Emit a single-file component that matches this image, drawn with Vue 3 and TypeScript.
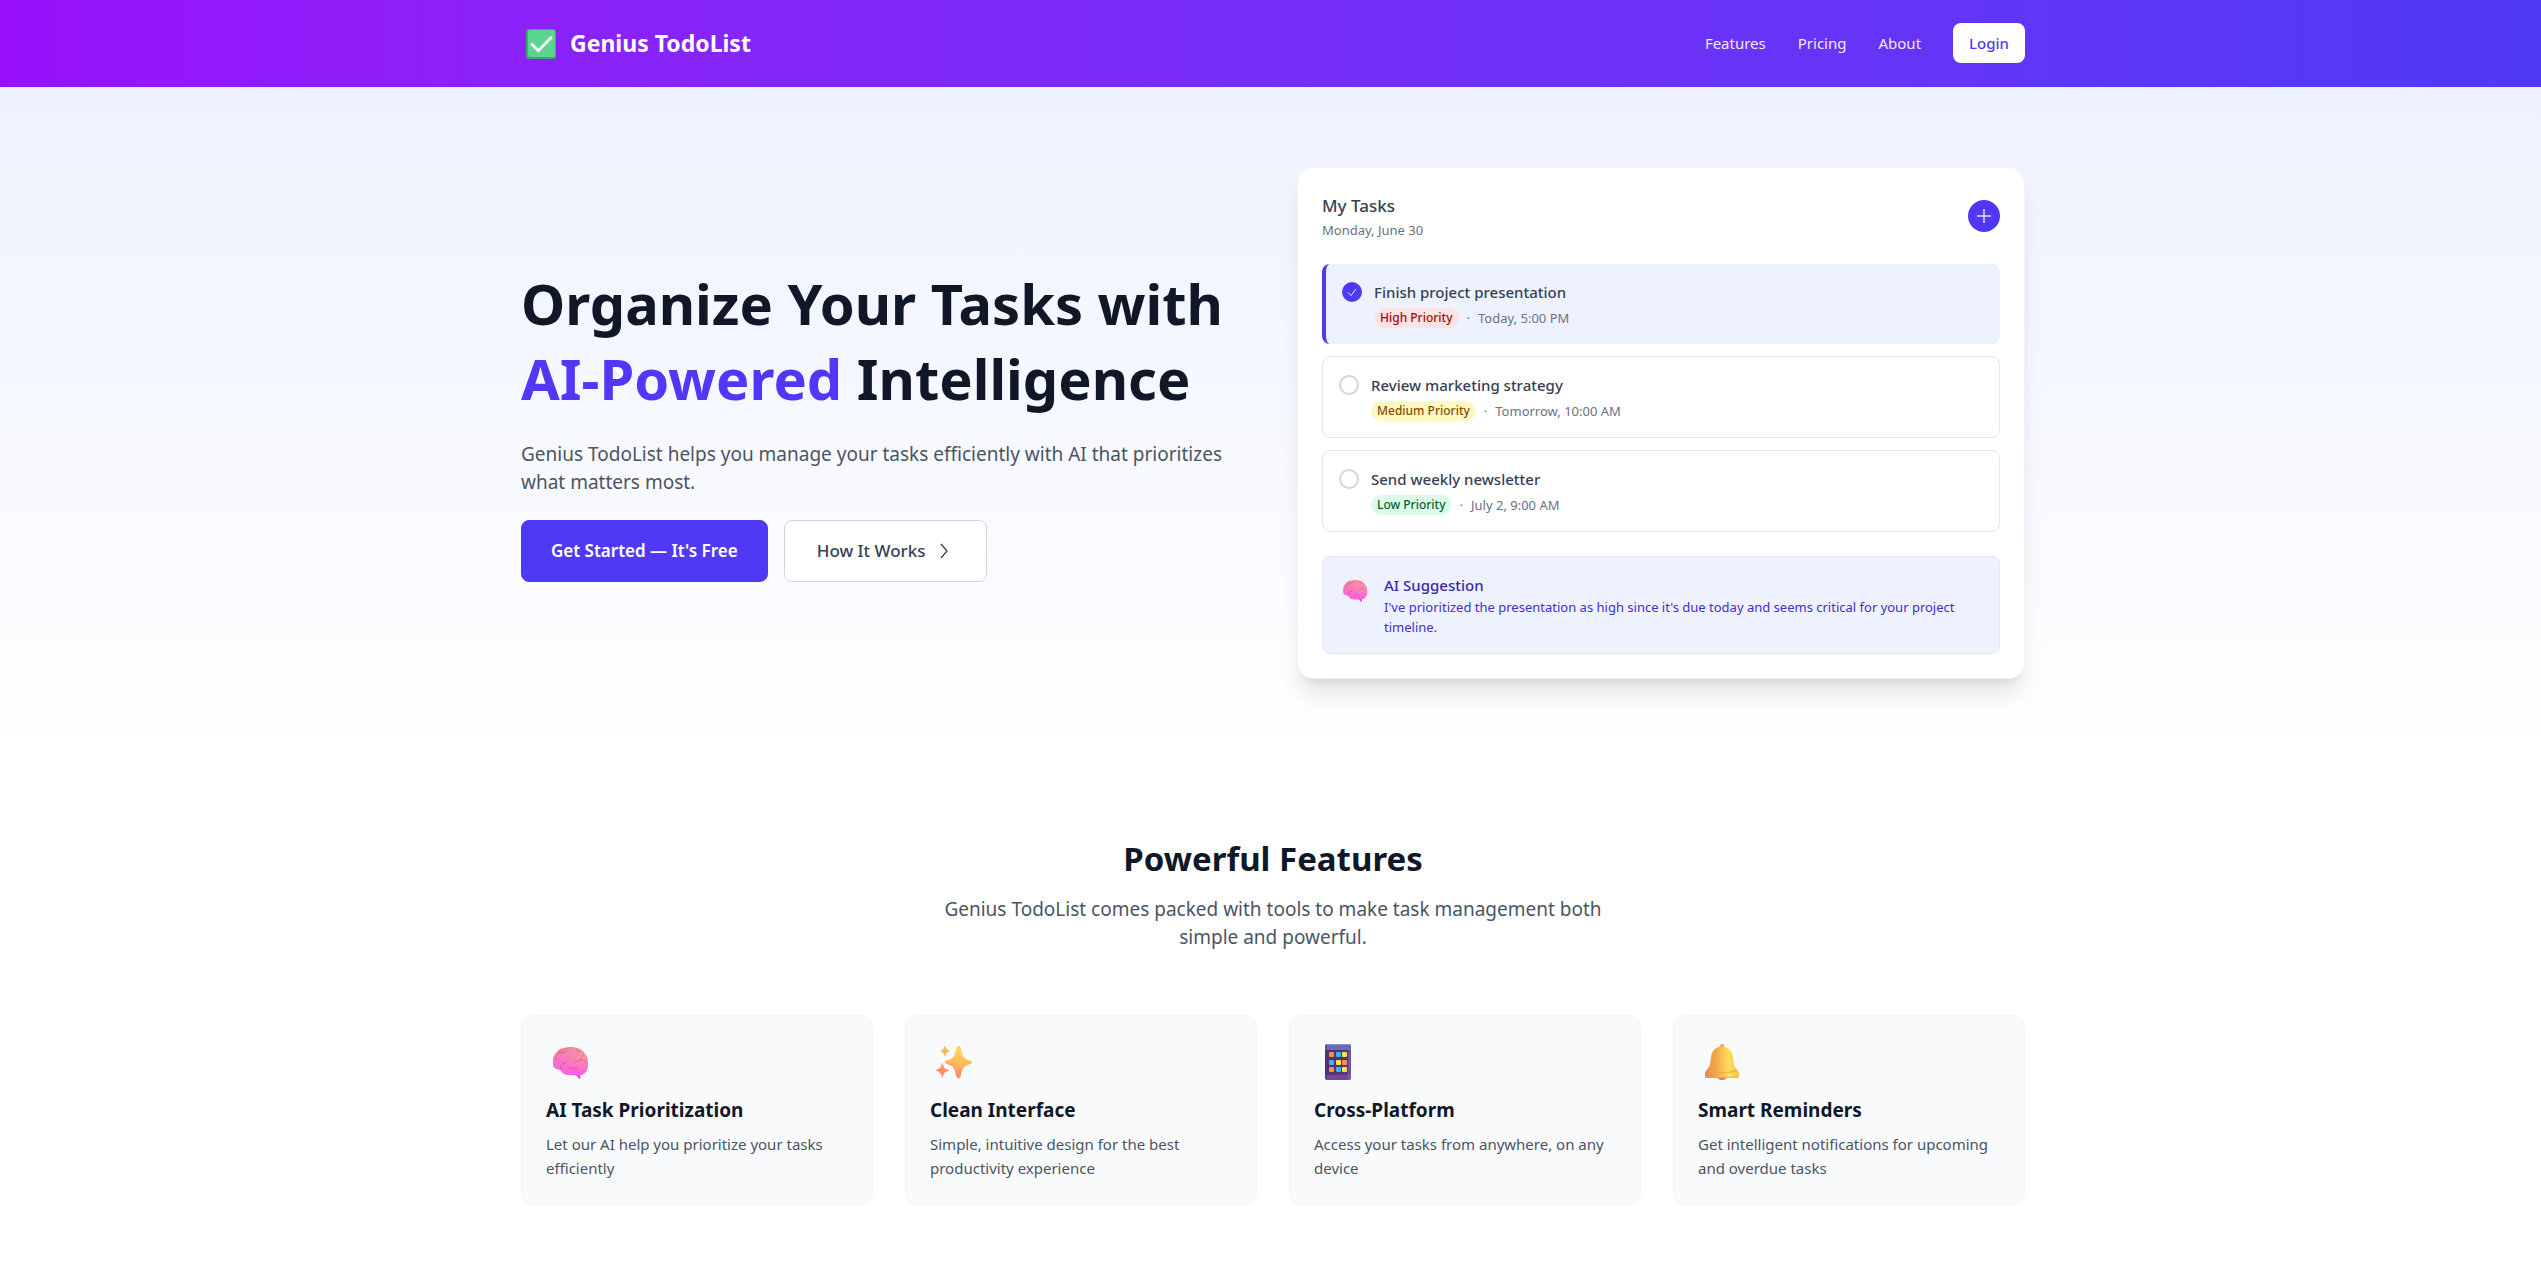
<script setup lang="ts">
import { ref } from 'vue'

interface Task {
  id: string
  title: string
  level: 'high' | 'medium' | 'low'
  priority: string
  due: string
  done: boolean
}

interface Feature {
  icon: 'brain' | 'sparkles' | 'phone' | 'bell'
  title: string
  text: string
}

const links = ['Features', 'Pricing', 'About']

const tasks = ref<Task[]>([
  { id: 'task-1', title: 'Finish project presentation', level: 'high', priority: 'High Priority', due: 'Today, 5:00 PM', done: true },
  { id: 'task-2', title: 'Review marketing strategy', level: 'medium', priority: 'Medium Priority', due: 'Tomorrow, 10:00 AM', done: false },
  { id: 'task-3', title: 'Send weekly newsletter', level: 'low', priority: 'Low Priority', due: 'July 2, 9:00 AM', done: false },
])

const features: Feature[] = [
  { icon: 'brain', title: 'AI Task Prioritization', text: 'Let our AI help you prioritize your tasks efficiently' },
  { icon: 'sparkles', title: 'Clean Interface', text: 'Simple, intuitive design for the best productivity experience' },
  { icon: 'phone', title: 'Cross-Platform', text: 'Access your tasks from anywhere, on any device' },
  { icon: 'bell', title: 'Smart Reminders', text: 'Get intelligent notifications for upcoming and overdue tasks' },
]

// App tiles on the phone icon: position and colour
const tiles = [
  [15, 12, '#ff8f45'], [22, 12, '#35b5f5'], [28, 12, '#ffe052'],
  [15, 20, '#35b5f5'], [22, 20, '#ffe052'], [28, 20, '#ff8f45'],
  [15, 27, '#ff8f45'], [22, 27, '#35b5f5'], [28, 27, '#ffe052'],
] as const
</script>

<template>
  <div class="page">
    <svg class="defs" width="0" height="0" aria-hidden="true">
      <defs>
        <linearGradient id="brain-fill" x1="0.3" y1="0" x2="0.45" y2="1">
          <stop offset="0" stop-color="#f08a93" />
          <stop offset="0.5" stop-color="#fb72c6" />
          <stop offset="1" stop-color="#ff5fe2" />
        </linearGradient>
        <radialGradient id="brain-side" cx="0.9" cy="0.3" r="0.6">
          <stop offset="0" stop-color="#ff9d9d" stop-opacity="0.8" />
          <stop offset="1" stop-color="#ff9d9d" stop-opacity="0" />
        </radialGradient>
        <symbol id="brain" viewBox="0 0 55 40" overflow="visible">
          <path d="M29 34 L33.500 39 L34.400 38.600 L34.300 34 Z" fill="#ff3fc8" />
          <path d="M7 22 C7 17 8 14.500 11 12 C13.500 8.500 17 8 19 7.800 C22 6.600 27 6.700 30 7.800 C34 8.300 37 10.500 38.500 13.500 C41.500 16 42.400 20 41.800 23 C42.800 28 40.500 33 36.500 34.400 C31 35.700 24 35.400 20 34.800 C17 34.200 15.500 32 14.500 29.800 C11 30 7.500 28 7 25.500 Z" fill="url(#brain-fill)" />
          <path d="M7 22 C7 17 8 14.500 11 12 C13.500 8.500 17 8 19 7.800 C22 6.600 27 6.700 30 7.800 C34 8.300 37 10.500 38.500 13.500 C41.500 16 42.400 20 41.800 23 C42.800 28 40.500 33 36.500 34.400 C31 35.700 24 35.400 20 34.800 C17 34.200 15.500 32 14.500 29.800 C11 30 7.500 28 7 25.500 Z" fill="url(#brain-side)" />
          <g fill="none" stroke="#cf4f8f" stroke-width="1" stroke-linecap="round" opacity="0.6">
            <path d="M9 20 C10 15 14 12.500 18 12 C20 11.500 20 9.500 22 9" />
            <path d="M12 12.500 C14 12 15 11 15.500 10" />
            <path d="M14.500 29.500 C14 26 16 24 19 23.500 M15.500 22 C17 24.500 20 23 21 21.500" />
            <path d="M30 9 C30 11 32 12 34 11.500 M37.500 14 C36 16 36 18 34 20 C31.500 22 29 20.500 28 22.500" />
            <path d="M34 20 C37 19.500 39 21 40 23" />
            <path d="M22 28 C25 27 27 29 31 27.500 M30 29.500 C29 31 28 31 27 31" />
          </g>
        </symbol>
        <linearGradient id="spark-fill" x1="0.6" y1="0" x2="0.4" y2="1">
          <stop offset="0.150" stop-color="#ffd257" />
          <stop offset="0.550" stop-color="#ffb85c" />
          <stop offset="1" stop-color="#ff806c" />
        </linearGradient>
        <linearGradient id="spark-small" x1="0" y1="0" x2="0" y2="1">
          <stop offset="0" stop-color="#f3a55e" />
          <stop offset="1" stop-color="#ff7a6e" />
        </linearGradient>
        <symbol id="sparkles" viewBox="0 0 55 40" overflow="visible">
          <path d="M28.500 6 C30 6 30.600 7.500 31 9.500 C32.200 16 33.800 18.600 39 20 C41 20.600 42 21.200 42 22.300 C42 23.400 41 24 39 24.600 C33.800 26.200 32.200 28.500 31 35 C30.600 37 30 38.300 28.500 38.300 C27 38.300 26.400 37 26 35 C24.800 28.500 23.200 26.200 18 24.600 C16 24 15 23.400 15 22.300 C15 21.200 16 20.600 18 20 C23.200 18.600 24.800 16 26 9.500 C26.400 7.500 27 6 28.500 6 Z" fill="url(#spark-fill)" />
          <path d="M15 6 C15.800 8.800 16.500 9.800 19.500 11 C16.500 12.200 15.800 13.400 15 16.200 C14.200 13.400 13.500 12.200 10.700 11 C13.500 9.800 14.200 8.800 15 6 Z" fill="#efb75c" stroke="#efb75c" stroke-width="0.600" stroke-linejoin="round" />
          <path d="M12.300 23.400 C13.400 27.600 14.600 28.900 18.600 30.300 C14.600 31.700 13.400 33.300 12.300 37.300 C11.200 33.300 10 31.700 6 30.300 C10 28.900 11.200 27.600 12.300 23.400 Z" fill="url(#spark-small)" stroke="#ff8a6c" stroke-width="0.600" stroke-linejoin="round" />
        </symbol>
        <linearGradient id="phone-fill" x1="0" y1="0" x2="1" y2="1">
          <stop offset="0" stop-color="#56305f" />
          <stop offset="0.500" stop-color="#59306f" />
          <stop offset="1" stop-color="#46479c" />
        </linearGradient>
        <clipPath id="phone-clip"><rect x="11" y="4" width="26" height="36" rx="3" /></clipPath>
        <linearGradient id="bell-fill" x1="0" y1="0" x2="1" y2="0">
          <stop offset="0" stop-color="#e08a4e" />
          <stop offset="0.350" stop-color="#f3ab48" />
          <stop offset="0.700" stop-color="#ffdf5c" />
          <stop offset="1" stop-color="#fbc04a" />
        </linearGradient>
        <symbol id="bell" viewBox="0 0 55 40" overflow="visible">
          <ellipse cx="24" cy="37.500" rx="4" ry="2.500" fill="#e0785a" />
          <rect x="22" y="4" width="4" height="5" rx="2" fill="#eda544" />
          <path d="M24 6.500 C30 6.500 34 10.500 34.800 16 L36 24 C36.400 27 38 28.500 39.500 30 C41 31.500 41 33 41 36 C41 37.500 40.500 38 39 38 L9 38 C7.500 38 7 37.500 7 36 C7 33 7 31.500 8.500 30 C10 28.500 11.600 27 12 24 L13.200 16 C14 10.500 18 6.500 24 6.500 Z" fill="url(#bell-fill)" />
          <path d="M10 30.500 C18 33.500 30 33.500 38 30.500" fill="none" stroke="#f09a3c" stroke-width="1.500" opacity="0.550" />
          <path d="M7.300 36.500 C18 38 30 38 40.700 36.500" fill="none" stroke="#ee9a44" stroke-width="1.200" opacity="0.600" />
        </symbol>
        <symbol id="phone" viewBox="0 0 55 40" overflow="visible">
          <g clip-path="url(#phone-clip)">
            <rect x="11" y="4" width="26" height="36" fill="url(#phone-fill)" />
            <rect x="11" y="4" width="26" height="6" fill="#6a69b9" />
            <rect x="11" y="4" width="26" height="1" fill="#8b8fd0" />
            <rect x="11" y="35" width="26" height="5" fill="#764795" />
            <rect x="11" y="4" width="2" height="36" fill="#4a3a6c" opacity="0.450" />
            <rect x="34" y="10" width="3" height="30" fill="#7a62a8" opacity="0.700" />
          </g>
          <rect v-for="([x, y, fill], i) in tiles" :key="i" :x="x" :y="y" width="5" height="5" rx="1" :fill="fill" />
        </symbol>
      </defs>
    </svg>

    <header class="topbar">
      <div class="container topbar-row">
        <div class="brand">
          <svg class="brand-icon" viewBox="0 0 41 32" aria-hidden="true">
            <rect x="5" y="2" width="30" height="30" rx="3" fill="#3ea673" />
            <rect x="7" y="3" width="27" height="27" rx="2" fill="#5ad48e" />
            <path d="M11 17.300 L17.300 23.700 L30 10.700" fill="none" stroke="#f6f3fb" stroke-width="3" stroke-linecap="round" stroke-linejoin="round" />
          </svg>
          <span class="brand-name">Genius TodoList</span>
        </div>
        <nav class="nav">
          <a v-for="link in links" :key="link" class="nav-link" href="#">{{ link }}</a>
          <button class="login" type="button">Login</button>
        </nav>
      </div>
    </header>

    <section class="hero">
      <div class="container hero-grid">
        <div>
          <h1 class="headline">Organize Your Tasks with <span class="accent">AI-Powered</span> Intelligence</h1>
          <p class="lead hero-lead">Genius TodoList helps you manage your tasks efficiently with AI that prioritizes what matters most.</p>
          <div class="actions">
            <button class="cta primary" type="button">Get Started — It's Free</button>
            <button class="cta secondary" type="button">
              How It Works
              <svg width="20" height="20" viewBox="0 0 20 20" aria-hidden="true">
                <path d="M7 3 L13 10 L7 17" fill="none" stroke="currentColor" stroke-width="1.300" />
              </svg>
            </button>
          </div>
        </div>

        <div class="board">
          <div class="board-head">
            <div>
              <h2 class="board-title">My Tasks</h2>
              <p class="board-date">Monday, June 30</p>
            </div>
            <button class="add" type="button" aria-label="Add task">
              <svg width="16" height="16" viewBox="0 0 16 16" aria-hidden="true">
                <path d="M8 1 V15 M1 8 H15" stroke="#fff" stroke-width="1.500" opacity="0.850" />
              </svg>
            </button>
          </div>

          <ul class="tasks">
            <li v-for="task in tasks" :key="task.id" class="task" :class="{ done: task.done }">
              <span class="tick">
                <input :id="task.id" v-model="task.done" class="tick-input" type="checkbox" />
                <svg v-if="task.done" class="tick-mark" width="20" height="20" viewBox="0 0 20 20" aria-hidden="true">
                  <path d="M6 10.500 L9 13.500 L14 7" fill="none" stroke="#fff" stroke-width="1" opacity="0.900" />
                </svg>
              </span>
              <div>
                <label class="task-title" :for="task.id">{{ task.title }}</label>
                <div class="meta">
                  <span class="badge" :class="task.level">{{ task.priority }}</span>
                  <span>·</span>
                  <span>{{ task.due }}</span>
                </div>
              </div>
            </li>
          </ul>

          <div class="suggestion">
            <svg class="suggestion-icon" viewBox="1 -3 48 46" aria-hidden="true">
              <use href="#brain" width="55" height="40" />
            </svg>
            <div>
              <h3 class="suggestion-title">AI Suggestion</h3>
              <p class="suggestion-text">I've prioritized the presentation as high since it's due today and seems critical for your project timeline.</p>
            </div>
          </div>
        </div>
      </div>
    </section>

    <section class="features">
      <div class="container">
        <div class="intro">
          <h2 class="section-title">Powerful Features</h2>
          <p class="lead">Genius TodoList comes packed with tools to make task management both simple and powerful.</p>
        </div>
        <div class="feature-grid">
          <article v-for="feature in features" :key="feature.title" class="feature">
            <svg class="feature-icon" viewBox="0 0 55 40" aria-hidden="true">
              <use :href="`#${feature.icon}`" width="55" height="40" />
            </svg>
            <h3 class="feature-title">{{ feature.title }}</h3>
            <p class="feature-text">{{ feature.text }}</p>
          </article>
        </div>
      </div>
    </section>
  </div>
</template>

<style>
body {
  margin: 0;
  background: #fff;
}
</style>

<style scoped>
.page {
  font-family: "Noto Sans", sans-serif;
  font-size: 15px;
  line-height: 24px;
  color: #101828;
}

.page * {
  box-sizing: border-box;
}

h1,
h2,
h3,
p,
ul {
  margin: 0;
  padding: 0;
}

button {
  font-family: inherit;
  cursor: pointer;
}

svg {
  display: block;
  flex-shrink: 0;
}

.defs {
  position: absolute;
}

.container {
  max-width: 1541px;
  margin: 0 auto;
  padding: 0 16px 0 21px;
}

.topbar {
  padding: 23px 0 24px;
  background: linear-gradient(to right in oklab, #9810fa, #4f39f6);
}

.topbar-row,
.brand,
.nav {
  display: flex;
  align-items: center;
}

.topbar-row {
  justify-content: space-between;
}

.brand {
  gap: 8px;
}

.brand-icon {
  width: 41px;
  height: 32px;
}

.brand-name {
  font-size: 23px;
  font-weight: 700;
  line-height: 32px;
  color: #fff;
}

.nav {
  gap: 32px;
}

.nav-link {
  color: #fff;
  opacity: 0.9;
  text-decoration: none;
}

.login {
  padding: 8px 16px;
  border: 0;
  border-radius: 8px;
  background: #fff;
  font-size: 15px;
  font-weight: 500;
  line-height: 24px;
  color: #4f39f6;
}

.hero {
  padding: 80px 0;
  background: linear-gradient(to bottom, #eef2ff, #fff);
}

.hero-grid {
  display: grid;
  grid-template-columns: 1fr 1fr;
  gap: 48px;
  align-items: center;
}

.headline {
  margin-bottom: 24px;
  padding-top: 2px;
  font-size: 56px;
  font-weight: 700;
  line-height: 75px;
}

.accent {
  color: #4f39f6;
}

.lead {
  font-size: 19px;
  line-height: 28px;
  color: #4a5565;
}

.hero-lead {
  margin-bottom: 24px;
}

.actions {
  display: flex;
  gap: 16px;
}

.cta {
  display: flex;
  align-items: center;
  gap: 8px;
  padding: 16px 32px;
  border: 1px solid #d1d5dc;
  border-radius: 8px;
  font-size: 17px;
  line-height: 28px;
}

.primary {
  padding: 16px 29px;
  border-color: #4f39f6;
  background: #4f39f6;
  font-weight: 600;
  color: #fff;
}

.secondary {
  background: #fff;
  font-weight: 500;
  color: #364153;
}

.board {
  padding: 24px;
  border: 1px solid #f3f4f6;
  border-radius: 16px;
  background: #fff;
  box-shadow: 0 20px 25px -5px rgba(0, 0, 0, 0.1), 0 8px 10px -6px rgba(0, 0, 0, 0.1);
}

.board-head {
  display: flex;
  align-items: center;
  justify-content: space-between;
  margin-bottom: 24px;
}

.board-title {
  font-size: 17px;
  font-weight: 500;
  line-height: 28px;
  color: #364153;
}

.board-date {
  font-size: 13px;
  line-height: 20px;
  color: #6a7282;
}

.add {
  display: grid;
  place-items: center;
  width: 32px;
  height: 32px;
  padding: 0;
  border: 0;
  border-radius: 50%;
  background: #4f39f6;
}

.tasks {
  display: grid;
  gap: 12px;
  list-style: none;
}

.task {
  display: flex;
  gap: 12px;
  padding: 16px;
  border: 1px solid #e5e7eb;
  border-radius: 8px;
}

.task.done {
  border-width: 0 0 0 4px;
  border-color: #4f39f6;
  background: #eef2ff;
}

.tick {
  display: grid;
  flex-shrink: 0;
  width: 20px;
  height: 20px;
  margin-top: 2px;
}

.tick-input,
.tick-mark {
  grid-area: 1 / 1;
}

.tick-mark {
  pointer-events: none;
}

.tick-input {
  appearance: none;
  width: 20px;
  height: 20px;
  margin: 0;
  border: 2px solid #d1d5dc;
  border-radius: 50%;
}

.tick-input:checked {
  border-color: #4f39f6;
  background: #4f39f6;
}

.task-title {
  display: block;
  font-weight: 500;
  color: #364153;
}

.meta {
  display: flex;
  gap: 8px;
  margin-top: 4px;
  font-size: 13px;
  line-height: 20px;
  color: #6a7282;
}

.badge {
  padding: 0 6px;
  border-radius: 10px;
  font-size: 12px;
  font-weight: 500;
}

.badge.high {
  background: #ffe2e2;
  color: #9f0712;
}

.badge.medium {
  background: #fef9c2;
  color: #894b00;
}

.badge.low {
  background: #dcfce7;
  color: #016630;
}

.suggestion {
  display: flex;
  gap: 12px;
  margin-top: 24px;
  padding: 16px;
  border: 1px solid #e0e7ff;
  border-radius: 8px;
  background: #eef2ff;
}

.suggestion-icon {
  width: 33px;
  height: 32px;
}

.suggestion-title {
  font-size: 15px;
  font-weight: 500;
  line-height: 24px;
  color: #372aac;
}

.suggestion-text {
  font-size: 13px;
  line-height: 20px;
  color: #432dd7;
}

.features {
  padding: 80px 0 60px;
  background: #fff;
}

.intro {
  max-width: 672px;
  margin: 0 auto 64px;
  text-align: center;
}

.section-title {
  margin-bottom: 16px;
  font-size: 33px;
  font-weight: 700;
  line-height: 40px;
}

.feature-grid {
  display: grid;
  grid-template-columns: repeat(4, 1fr);
  gap: 32px;
}

.feature {
  padding: 24px;
  border: 1px solid #f3f4f6;
  border-radius: 12px;
  background: #f9fafb;
}

.feature-icon {
  width: 55px;
  height: 40px;
  margin-bottom: 16px;
}

.feature-title {
  margin-bottom: 8px;
  font-size: 19px;
  font-weight: 700;
  line-height: 28px;
}

.feature-text {
  color: #4a5565;
}

@media (max-width: 1100px) {
  .hero-grid {
    grid-template-columns: 1fr;
  }

  .feature-grid {
    grid-template-columns: 1fr 1fr;
  }
}
</style>
